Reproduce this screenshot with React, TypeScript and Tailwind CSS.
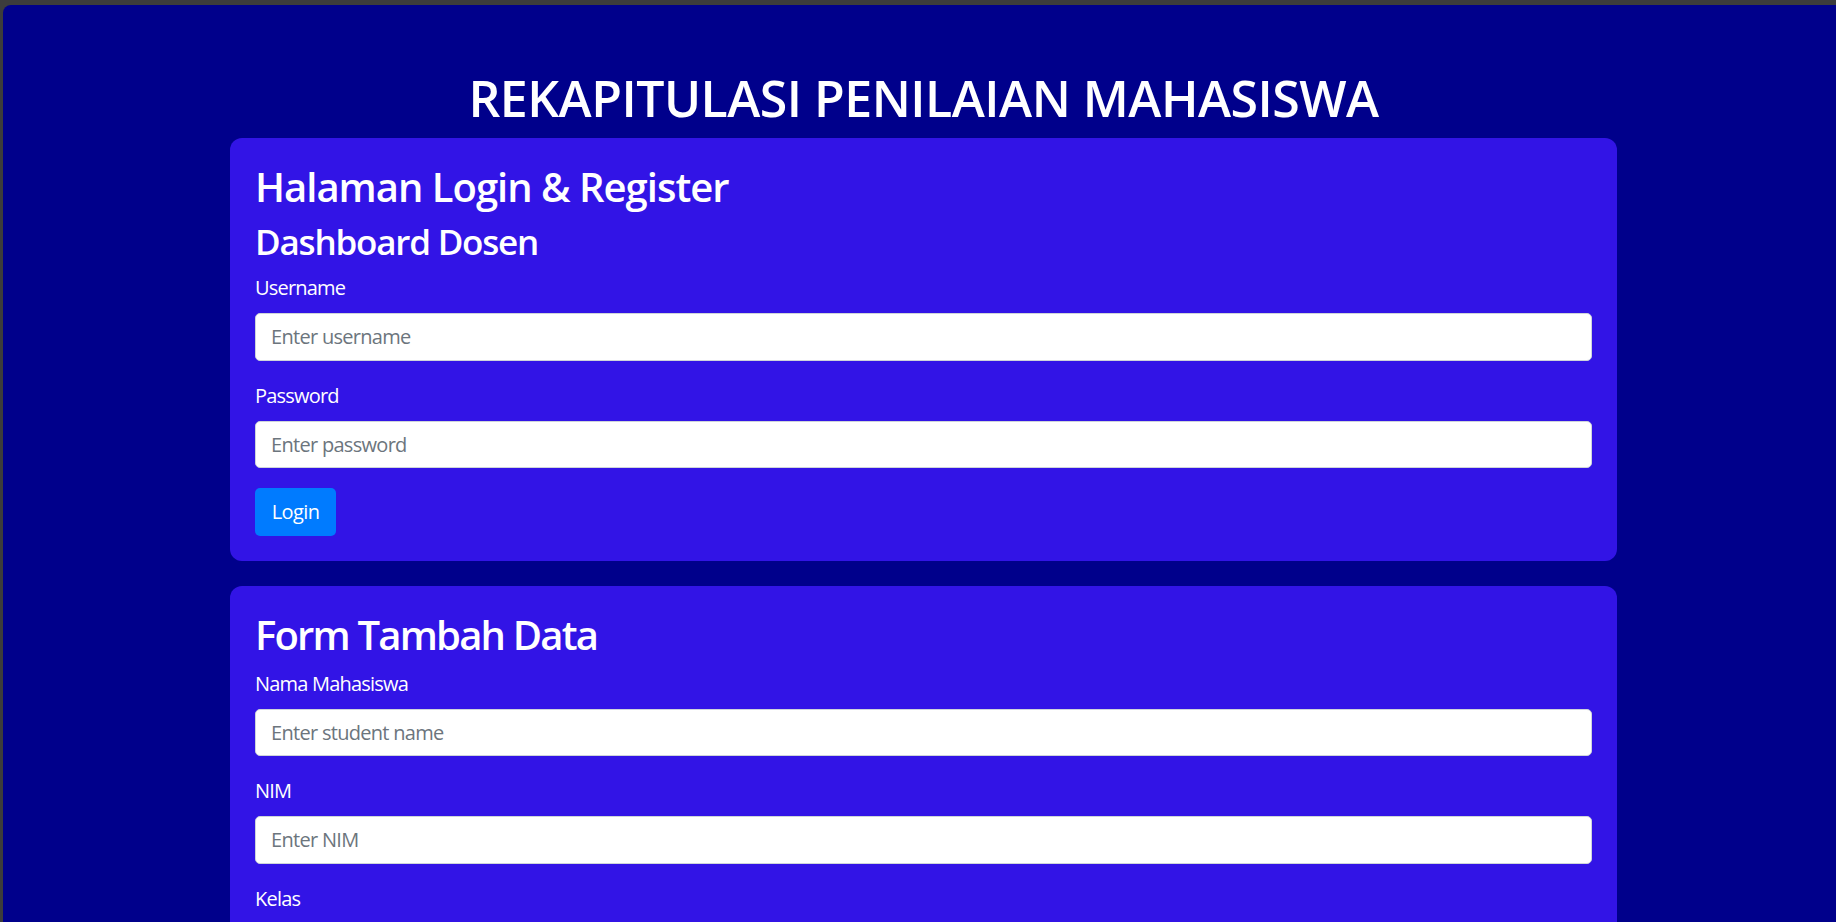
import { useState } from "react"

type FieldProps = {
  id: string
  label: string
  placeholder: string
  type?: string
}

function Field({ id, label, placeholder, type = "text" }: FieldProps) {
  const [value, setValue] = useState("")
  return (
    <div className="mb-[20px]">
      <label htmlFor={id} className="mb-[10px] inline-block text-[20px] leading-[30px] tracking-[-0.8px] text-white">
        {label}
      </label>
      <input
        id={id}
        type={type}
        value={value}
        onChange={(e) => setValue(e.target.value)}
        placeholder={placeholder}
        className="block h-[47.5px] w-full rounded-[5px] border border-[#ced4da] bg-white px-[15px] text-[20px] leading-[30px] tracking-[-0.7px] text-[#495057] placeholder:text-[#6c757d] outline-none"
      />
    </div>
  )
}

function Card({ children, className = "" }: { children: React.ReactNode; className?: string }) {
  return <div className={`rounded-[12px] bg-[#3214e6] p-[25px] ${className}`}>{children}</div>
}

export default function App() {
  return (
    <div className="min-h-screen bg-[#3c3c3c] pl-[3px] pt-[5px] font-['Open_Sans','Noto_Sans',sans-serif]">
      <div className="min-h-[917px] rounded-tl-[8px] bg-[#00008b] pb-[60px] pl-[8px]">
        <div className="mx-auto w-[1387px] pt-[63px]">
          <h1 className="mb-[10px] text-center text-[50px] leading-[60px] font-semibold tracking-[-0.5px] text-white">
            REKAPITULASI PENILAIAN MAHASISWA
          </h1>

          <Card>
            <h2 className="mb-[10px] text-[40px] leading-[48px] font-semibold tracking-[-1px] text-white">
              Halaman Login &amp; Register
            </h2>
            <h3 className="mb-[10px] text-[35px] leading-[42px] font-semibold tracking-[-1.2px] text-white">
              Dashboard Dosen
            </h3>
            <form onSubmit={(e) => e.preventDefault()}>
              <Field id="username" label="Username" placeholder="Enter username" />
              <Field id="password" label="Password" placeholder="Enter password" type="password" />
              <button
                type="submit"
                className="h-[47.5px] w-[81px] rounded-[5px] bg-[#007bff] text-[20px] leading-[30px] tracking-[-0.6px] text-white"
              >
                Login
              </button>
            </form>
          </Card>

          <Card className="mt-[25px]">
            <h2 className="mb-[10px] text-[40px] leading-[48px] font-semibold tracking-[-1.8px] text-white">
              Form Tambah Data
            </h2>
            <form onSubmit={(e) => e.preventDefault()}>
              <Field id="nama" label="Nama Mahasiswa" placeholder="Enter student name" />
              <Field id="nim" label="NIM" placeholder="Enter NIM" />
              <Field id="kelas" label="Kelas" placeholder="Enter class" />
              <Field id="nilai" label="Nilai" placeholder="Enter score" />
              <button
                type="submit"
                className="h-[47.5px] rounded-[5px] bg-[#007bff] px-[15px] text-[20px] leading-[30px] text-white"
              >
                Tambah Data
              </button>
            </form>
          </Card>
        </div>
      </div>
    </div>
  )
}
